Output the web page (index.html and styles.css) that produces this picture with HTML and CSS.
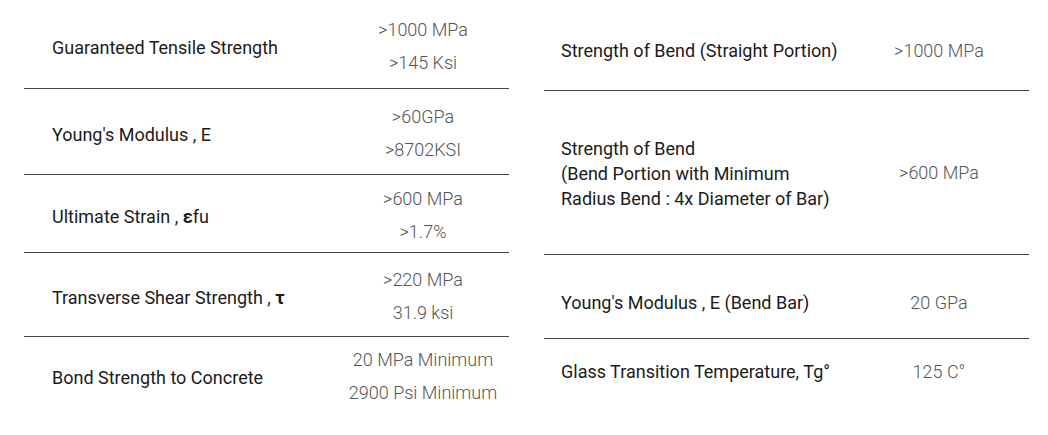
FILE: index.html
```html
<!DOCTYPE html>
<html lang="en">
<head>
<meta charset="utf-8">
<title>GFRP Properties</title>
<link rel="stylesheet" href="styles.css">
</head>
<body>
<div class="specs">
  <div class="table table--left">
    <div class="row row--h89">
      <div class="label">Guaranteed Tensile Strength</div>
      <div class="value"><span>&gt;1000 MPa</span><span>&gt;145 Ksi</span></div>
    </div>
    <div class="row row--h86">
      <div class="label">Young's Modulus , E</div>
      <div class="value"><span>&gt;60GPa</span><span>&gt;8702KSI</span></div>
    </div>
    <div class="row row--h78">
      <div class="label">Ultimate Strain , <b>ε</b>fu</div>
      <div class="value"><span>&gt;600 MPa</span><span>&gt;1.7%</span></div>
    </div>
    <div class="row row--h84">
      <div class="label">Transverse Shear Strength , <b>τ</b></div>
      <div class="value"><span>&gt;220 MPa</span><span>31.9 ksi</span></div>
    </div>
    <div class="row row--h74 row--last">
      <div class="label">Bond Strength to Concrete</div>
      <div class="value"><span>20 MPa Minimum</span><span>2900 Psi Minimum</span></div>
    </div>
  </div>
  <div class="table table--right">
    <div class="row row--h91">
      <div class="label">Strength of Bend (Straight Portion)</div>
      <div class="value">&gt;1000 MPa</div>
    </div>
    <div class="row row--h164 row--centered">
      <div class="label label--multi">Strength of Bend<br>(Bend Portion with Minimum<br>Radius Bend : 4x Diameter of Bar)</div>
      <div class="value">&gt;600 MPa</div>
    </div>
    <div class="row row--h84">
      <div class="label">Young's Modulus , E (Bend Bar)</div>
      <div class="value">20 GPa</div>
    </div>
    <div class="row row--h54 row--last">
      <div class="label">Glass Transition Temperature, Tg°</div>
      <div class="value">125 C°</div>
    </div>
  </div>
</div>
</body>
</html>
```

FILE: styles.css
```css
* { box-sizing: border-box; }

html, body {
  margin: 0;
  padding: 0;
  background: #ffffff;
}

body {
  font-family: Roboto, "Liberation Sans", Arial, sans-serif;
  font-size: 18px;
  color: #1b1b1b;
}

.specs {
  display: flex;
  gap: 35px;
  padding: 0 19px 0 24px;
}

.table {
  flex: 1 1 0;
  display: flex;
  flex-direction: column;
}

.row {
  display: grid;
  align-items: center;
  border-bottom: 1px solid #444444;
}

.row--last { border-bottom: none; }

.table--left .row { grid-template-columns: 1fr 172px; }
.table--right .row { grid-template-columns: 1fr 180px; }

.row--h89 { height: 89px; }
.row--h86 { height: 86px; }
.row--h78 { height: 78px; }
.row--h84 { height: 84px; }
.row--h74 { height: 74px; }
.row--h91 { height: 91px; }
.row--h164 { height: 164px; }
.row--h54 { height: 54px; }

.label {
  line-height: 24px;
  font-weight: 400;
  color: #1b1b1b;
  white-space: nowrap;
}

.label b { font-weight: 700; }

.value {
  display: flex;
  flex-direction: column;
  align-items: center;
  text-align: center;
  font-weight: 300;
  color: #555555;
  line-height: 33px;
  white-space: nowrap;
}

.table--left .label { padding: 7px 0 0 28px; }
.table--left .value { padding-top: 3px; }

.table--right .label { padding: 12px 0 0 17px; }
.table--right .value { padding-top: 12px; line-height: 24px; }

.label--multi { line-height: 25px; }

.row--centered .label,
.row--centered .value { padding-top: 2px; }
.table--right .row--centered .value { padding-top: 0; }
```
